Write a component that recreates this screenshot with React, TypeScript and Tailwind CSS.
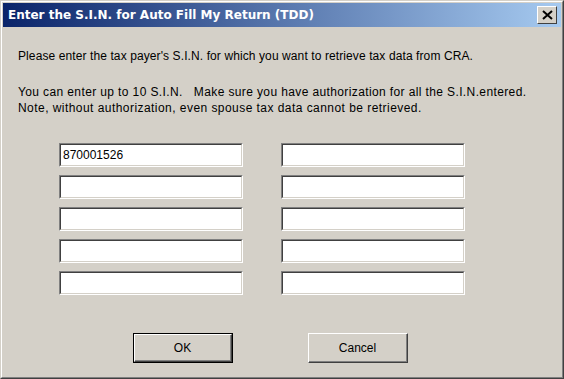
import { useState } from 'react'

function SinInput({ value }: { value: string }) {
  return (
    <div className="w-[184px] h-[24px] border-[1px] border-t-[#808080] border-l-[#808080] border-b-white border-r-white">
      <div className="h-full w-full border-[1px] border-t-[#404040] border-l-[#404040] border-b-[#d4d0c8] border-r-[#d4d0c8] bg-white flex items-center px-[2px]">
        <span className="text-[12px] leading-none text-black">{value}</span>
      </div>
    </div>
  )
}

export default function App() {
  const [sins] = useState<string[]>(['870001526', '', '', '', '', '', '', '', '', ''])

  return (
    <div
      className="w-[564px] h-[379px] bg-[#d4d0c8] flex flex-col border-[1px] border-t-[#d4d0c8] border-l-[#d4d0c8] border-b-[#404040] border-r-[#404040] overflow-hidden"
      style={{ fontFamily: '"Liberation Sans", Arial, sans-serif' }}
    >
      <div className="flex-1 flex flex-col border-[1px] border-t-white border-l-white border-b-[#808080] border-r-[#808080] p-[1px]">
        {/* Title bar */}
        <div className="h-[24px] flex items-center justify-between pl-[5px] pr-[4px] bg-[linear-gradient(to_right,#0a246a,#a6caf0)]">
          <span className="text-white font-bold text-[12px]" style={{ fontFamily: '"DejaVu Sans", Verdana, sans-serif' }}>
            Enter the S.I.N. for Auto Fill My Return (TDD)
          </span>
          <button className="w-[20px] h-[18px] bg-[#d4d0c8] border-[1px] border-t-white border-l-white border-b-[#404040] border-r-[#404040] flex items-center justify-center">
            <svg width="11" height="10" viewBox="0 0 11 10">
              <path d="M1 1L10 9M10 1L1 9" stroke="black" strokeWidth="2" />
            </svg>
          </button>
        </div>

        {/* Body */}
        <div className="flex-1 flex flex-col pl-[15px] pt-[21px] text-[12px] text-black leading-[16px]">
          <p className="tracking-[0.1px]">Please enter the tax payer's S.I.N. for which you want to retrieve tax data from CRA.</p>
          <p className="mt-[20px] tracking-[0.38px]">You can enter up to 10 S.I.N.&nbsp;&nbsp; Make sure you have authorization for all the S.I.N.entered.</p>
          <p className="tracking-[0.45px]">Note, without authorization, even spouse tax data cannot be retrieved.</p>

          <div className="mt-[27px] ml-[41px] grid grid-cols-[184px_184px] gap-x-[38px] gap-y-[8px]">
            {sins.map((s, i) => (
              <SinInput key={i} value={s} />
            ))}
          </div>

          <div className="mt-[38px] ml-[115px] flex gap-[75px]">
            <button className="w-[100px] h-[30px] border-[1px] border-black">
              <div className="h-full w-full border-[1px] border-t-white border-l-white border-b-[#404040] border-r-[#404040]">
                <div className="h-full w-full border-b-[1px] border-r-[1px] border-[#808080] flex items-center justify-center text-[12px]">
                  OK
                </div>
              </div>
            </button>
            <button className="w-[100px] h-[30px] border-[1px] border-t-white border-l-white border-b-[#404040] border-r-[#404040]">
              <div className="h-full w-full border-b-[1px] border-r-[1px] border-[#808080] flex items-center justify-center text-[12px]">
                Cancel
              </div>
            </button>
          </div>
        </div>
      </div>
    </div>
  )
}
